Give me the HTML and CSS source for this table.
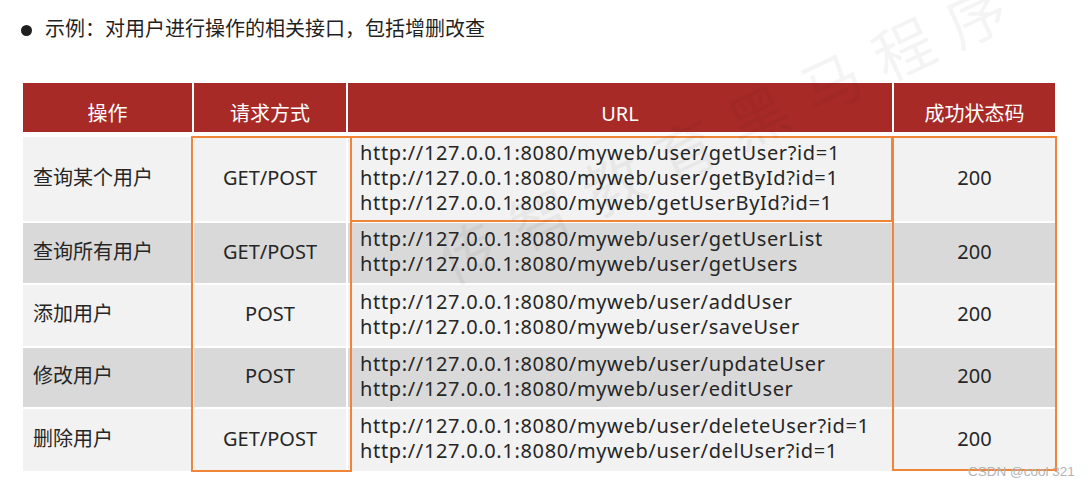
FILE: index.html
```html
<!DOCTYPE html>
<html lang="zh-CN">
<head>
<meta charset="utf-8">
<title>接口示例</title>
<link rel="stylesheet" href="styles.css">
</head>
<body>
  <div class="title">
    <span class="bullet"></span>
    <span class="title-text">示例：对用户进行操作的相关接口，包括增删改查</span>
  </div>

  <div class="table">
    <div class="head">
      <div class="hcell">操作</div>
      <div class="hcell">请求方式</div>
      <div class="hcell">URL</div>
      <div class="hcell">成功状态码</div>
    </div>
    <div class="body">
      <div class="row light r1">
        <div class="cell op">查询某个用户</div>
        <div class="cell method">GET/POST</div>
        <div class="cell url">
          <span>http://127.0.0.1:8080/myweb/user/getUser?id=1</span>
          <span>http://127.0.0.1:8080/myweb/user/getById?id=1</span>
          <span>http://127.0.0.1:8080/myweb/getUserById?id=1</span>
        </div>
        <div class="cell code">200</div>
      </div>
      <div class="row dark r2">
        <div class="cell op">查询所有用户</div>
        <div class="cell method">GET/POST</div>
        <div class="cell url">
          <span>http://127.0.0.1:8080/myweb/user/getUserList</span>
          <span>http://127.0.0.1:8080/myweb/user/getUsers</span>
        </div>
        <div class="cell code">200</div>
      </div>
      <div class="row light r3">
        <div class="cell op">添加用户</div>
        <div class="cell method">POST</div>
        <div class="cell url">
          <span>http://127.0.0.1:8080/myweb/user/addUser</span>
          <span>http://127.0.0.1:8080/myweb/user/saveUser</span>
        </div>
        <div class="cell code">200</div>
      </div>
      <div class="row dark r4">
        <div class="cell op">修改用户</div>
        <div class="cell method">POST</div>
        <div class="cell url">
          <span>http://127.0.0.1:8080/myweb/user/updateUser</span>
          <span>http://127.0.0.1:8080/myweb/user/editUser</span>
        </div>
        <div class="cell code">200</div>
      </div>
      <div class="row light r5">
        <div class="cell op">删除用户</div>
        <div class="cell method">GET/POST</div>
        <div class="cell url">
          <span>http://127.0.0.1:8080/myweb/user/deleteUser?id=1</span>
          <span>http://127.0.0.1:8080/myweb/user/delUser?id=1</span>
        </div>
        <div class="cell code">200</div>
      </div>
    </div>

    <div class="mark mark-method"></div>
    <div class="mark mark-url"></div>
    <div class="mark mark-code"></div>
  </div>

  <div class="watermark">传智教育黑马程序</div>
  <div class="csdn">CSDN @cool 321</div>
</body>
</html>
```

FILE: styles.css
```css
html, body {
  margin: 0;
  padding: 0;
  background: #ffffff;
}

body {
  width: 1088px;
  height: 489px;
  overflow: hidden;
  position: relative;
  font-family: "Noto Sans", "Noto Sans CJK SC", sans-serif;
  color: #262626;
}

.title {
  display: flex;
  align-items: center;
  gap: 13px;
  height: 28px;
  margin: 15px 0 0 21px;
}

.bullet {
  width: 11px;
  height: 11px;
  border-radius: 50%;
  background: #1f1f1f;
  flex: none;
  margin-top: 2px;
}

.title-text {
  font-size: 20px;
  line-height: 28px;
  color: #1f1f1f;
}

.table {
  position: relative;
  margin: 40px 0 0 23px;
  width: 1032px;
}

.head,
.row {
  display: grid;
  grid-template-columns: 169px 152px 544px 161px;
  column-gap: 2px;
}

.head {
  height: 49px;
  margin-bottom: 5px;
}

.hcell {
  background: #a82a27;
  color: #ffffff;
  font-size: 20px;
  line-height: 25px;
  display: flex;
  align-items: center;
  justify-content: center;
  padding-top: 12px;
}

.body {
  display: flex;
  flex-direction: column;
  gap: 2px;
}

.r1 { height: 84px; }
.r2 { height: 60px; }
.r3 { height: 61px; }
.r4 { height: 59px; }
.r5 { height: 62px; }

.row.light .cell { background: #f2f2f2; }
.row.dark .cell { background: #d9d9d9; }

.cell {
  display: flex;
  align-items: center;
  font-size: 20px;
  line-height: 25px;
  color: #262626;
  padding-bottom: 4px;
  box-sizing: border-box;
}

.op {
  padding-left: 10px;
}

.method,
.code {
  justify-content: center;
}

.url {
  flex-direction: column;
  align-items: flex-start;
  justify-content: center;
  padding-left: 12px;
  letter-spacing: 0.65px;
}

.mark {
  position: absolute;
  top: 53px;
  border: 2px solid #ef8538;
  box-sizing: border-box;
  pointer-events: none;
}

.mark-method {
  left: 168px;
  width: 161px;
  height: 336px;
}

.mark-url {
  left: 327px;
  width: 543px;
  height: 86px;
}

.mark-code {
  left: 869px;
  width: 165px;
  height: 335px;
}

.watermark {
  position: absolute;
  left: 440px;
  top: 232px;
  font-family: "Noto Sans CJK SC", sans-serif;
  font-size: 60px;
  line-height: 60px;
  letter-spacing: 20px;
  white-space: nowrap;
  color: rgba(0, 0, 0, 0.045);
  transform-origin: 0 50%;
  transform: rotate(-25deg);
  pointer-events: none;
}

.csdn {
  position: absolute;
  left: 968px;
  top: 464px;
  font-family: "Liberation Sans", sans-serif;
  font-size: 13.5px;
  line-height: 16px;
  color: #b3b3b3;
  white-space: nowrap;
}
```
